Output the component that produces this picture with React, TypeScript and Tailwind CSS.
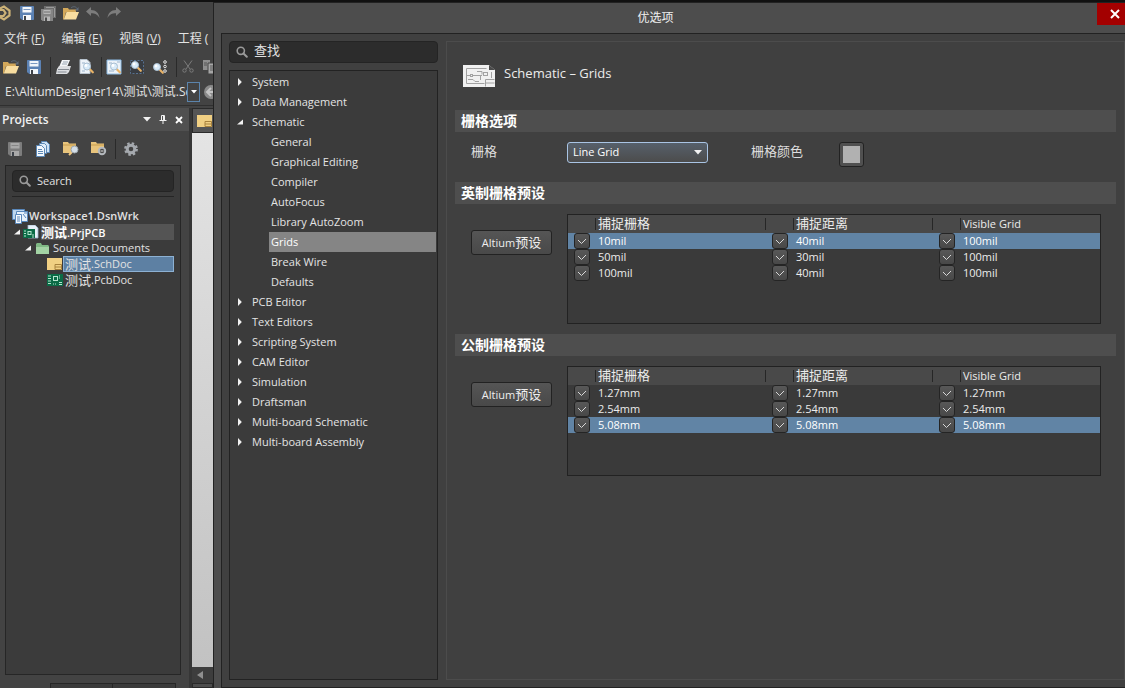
import React, { useState } from "react";

const FONT = "font-['Open_Sans','Noto_Sans_CJK_SC',sans-serif]";

type IconProps = { className?: string };

function Disk({ body, plate, className = "" }: { body: string; plate: string } & IconProps) {
  return (
    <svg viewBox="0 0 14 14" width="14" height="14" className={`shrink-0 ${className}`}>
      <path d="M0.500 0.500h13v13H2l-1.500-1.500z" fill={body} stroke={body} />
      <rect x="2.500" y="1" width="9" height="5.500" fill={plate} />
      <rect x="3" y="9" width="8" height="5" fill={plate} />
      <rect x="4" y="10" width="2" height="4" fill="#3e434a" />
      <path d="M3.500 3.500h7" stroke={body} strokeWidth="0.8" />
    </svg>
  );
}

function DiskStack() {
  return (
    <svg viewBox="0 0 15 15" width="15" height="15" className="shrink-0">
      <path d="M3 0h12v12H3z" fill="#6d6d6d" />
      <path d="M5 1.500h8M13.500 2v9" stroke="#9b9b9b" />
      <path d="M0 3h12v12H1.500L0 13.500z" fill="#858585" />
      <path d="M2.500 4h7v4h-7zM3 10.500h6V15H3z" fill="#b7b7b7" />
      <path d="M3 6h6" stroke="#707070" />
      <path d="M4 11.500h2V15H4z" fill="#4c4c4c" />
    </svg>
  );
}

function OpenFolder({ className = "" }: IconProps) {
  return (
    <svg viewBox="0 0 16 14" width="16" height="14" className={`shrink-0 ${className}`}>
      <path d="M0 2h5l1 1.500h7V6H3L1 13.500H0z" fill="#d3a85a" />
      <path d="M3.500 6H16l-3 7.500H0.8z" fill="#f8dda0" />
      <path d="M8 2c2-2 5-1.500 6 0.500" stroke="#5f6b7a" fill="none" />
      <path d="M15.500 1v3.500H12z" fill="#5f6b7a" />
    </svg>
  );
}

function Curve({ flip }: { flip?: boolean }) {
  return (
    <svg viewBox="0 0 14 12" width="14" height="12" className="shrink-0">
      <g transform={flip ? "matrix(-1 0 0 1 14 0)" : undefined}>
        <path d="M0 4.500 5 0v3c5 0 8 3 8.500 8C11.500 7.500 9 6.300 5 6.300V9z" fill="#7d7d7d" />
      </g>
    </svg>
  );
}

function Lens({ x, y, r = 3.5 }: { x: number; y: number; r?: number }) {
  return (
    <g>
      <path d={`M${x + r * 0.8} ${y + r * 0.8}l3 3`} stroke="#e8b368" strokeWidth="2.200" strokeLinecap="round" />
      <circle cx={x} cy={y} r={r} fill="#d9ebf9" stroke="#a9bfd2" />
      <circle cx={x - 1} cy={y - 1} r={r / 2.5} fill="#ffffff" />
    </g>
  );
}

function Printer() {
  return (
    <svg viewBox="0 0 16 14" width="16" height="14" className="shrink-0">
      <path d="M6 0h8l-3 7H3z" fill="#f4f6f8" />
      <path d="M7 2h5M6 4h5" stroke="#9aa6b2" />
      <path d="M3 6h12l-2 6-2 2H0l1-5z" fill="#dcdee1" />
      <path d="M2 9.500h11M1.500 12h9" stroke="#858b92" />
    </svg>
  );
}

function PageLens({ wide }: { wide?: boolean }) {
  return (
    <svg viewBox="0 0 16 16" width="16" height="16" className="shrink-0">
      <path d={wide ? "M1 1h14v14H1z" : "M2 0.500h7l3 3v11H2z"} fill="#edf3f9" stroke={wide ? "#8dbbe4" : "#b7c2cd"} />
      <path d={wide ? "M3 4h3M3 12h5M11 3h3" : "M4 4h3M4 12h3"} stroke="#9bb3cb" />
      <Lens x={wide ? 8 : 9} y={7.5} />
    </svg>
  );
}

function SelectLens() {
  return (
    <svg viewBox="0 0 16 16" width="16" height="16" className="shrink-0">
      <rect x="1.500" y="1.500" width="13" height="13" fill="#383c42" stroke="#56708f" strokeDasharray="2 1.500" />
      <Lens x={6} y={6} />
    </svg>
  );
}

function DotsLens() {
  return (
    <svg viewBox="0 0 16 16" width="16" height="16" className="shrink-0">
      <Lens x={5} y={8} />
      <g fill="none" stroke="#e6e6e6">
        <circle cx="13" cy="3" r="1.300" />
        <circle cx="13" cy="7.500" r="1.300" />
        <circle cx="13" cy="12" r="1.300" />
      </g>
    </svg>
  );
}

function Cut() {
  return (
    <svg viewBox="0 0 12 13" width="12" height="13" className="shrink-0" fill="none" stroke="#7c7c7c">
      <path d="M2 0.500 8 9M10 0.500 4 9" />
      <circle cx="2.500" cy="10.500" r="1.700" />
      <circle cx="9.500" cy="10.500" r="1.700" />
    </svg>
  );
}

function Copy() {
  return (
    <svg viewBox="0 0 14 14" width="14" height="14" className="shrink-0">
      <path d="M0 0h7v10H0z" fill="#8f8f8f" />
      <path d="M5 3h8v11H5z" fill="#a6a6a6" stroke="#444444" />
      <path d="M1 3h3M1 5h3M7 6h4M7 8h4M7 10h4" stroke="#555555" />
    </svg>
  );
}

function Pages() {
  return (
    <svg viewBox="0 0 14 16" width="14" height="16" className="shrink-0" stroke="#5b87b5">
      <path d="M5.500 0.500h5l3 3v8h-8z" fill="#cfe2f4" />
      <path d="M3.500 2.500h5l2 2v8h-7z" fill="#dfecf8" />
      <path d="M0.500 4.500h5l3 3v8h-8z" fill="#f3f8fd" />
      <path d="M2 8.500h4M2 10.500h5M2 12.500h5" />
    </svg>
  );
}

function FolderTool({ gear }: { gear?: boolean }) {
  return (
    <svg viewBox="0 0 16 15" width="16" height="15" className="shrink-0">
      <path d="M0 1h5l1 1.500h7V12H0z" fill="#e8c47c" />
      <path d="M0 4h13" stroke="#c79c4d" />
      {gear ? (
        <g>
          <circle cx="11" cy="10" r="3.200" fill="#4a4a4a" stroke="#b4b8bd" strokeWidth="2" />
          <path d="M9.500 10h3" stroke="#dddddd" />
        </g>
      ) : (
        <g>
          <path d="M9 11 6 14" stroke="#f0c983" strokeWidth="2" />
          <circle cx="11.500" cy="8.500" r="3.500" fill="#d4dfe8" stroke="#9aa5ae" />
        </g>
      )}
    </svg>
  );
}

function Gear() {
  return (
    <svg viewBox="0 0 14 14" width="14" height="14" className="shrink-0">
      <circle cx="7" cy="7" r="5.700" fill="none" stroke="#a5a9ae" strokeWidth="2.400" strokeDasharray="2.400 2.080" />
      <circle cx="7" cy="7" r="3.800" fill="none" stroke="#a5a9ae" strokeWidth="3" />
    </svg>
  );
}

function Magnifier() {
  return (
    <svg viewBox="0 0 12 12" width="12" height="12" className="shrink-0" fill="none" stroke="#9a9a9a">
      <circle cx="4.800" cy="4.800" r="3.600" strokeWidth="1.600" />
      <path d="m7.500 7.500 3.300 3.300" strokeWidth="2" strokeLinecap="round" />
    </svg>
  );
}

function SchDoc() {
  return (
    <svg viewBox="0 0 15 12" width="15" height="12" className="shrink-0">
      <path d="M0 0h15v12H0z" fill="#f1d083" />
      <path d="M8 6.500h6.500v5M8 6.500v5M8 9h6.500M8 11.500h6.500" fill="none" stroke="#a8823c" />
    </svg>
  );
}

function PcbDoc() {
  return (
    <svg viewBox="0 0 16 12" width="16" height="12" className="shrink-0">
      <path d="M0 0h16v12H0z" fill="#0b6b46" />
      <path d="M1 2h3M1 4.500h3M1 7h3M1 9.500h3M12 8.500h3M12 10.500h3" stroke="#b6e5cf" />
      <rect x="6.500" y="2.500" width="4" height="4" fill="#0b6b46" stroke="#b6e5cf" />
      <path d="M12 2h2M12 4h2M6 10h4" stroke="#b6e5cf" strokeDasharray="1 1" />
    </svg>
  );
}

function Project() {
  return (
    <svg viewBox="0 0 16 14" width="16" height="14" className="shrink-0">
      <path d="M5 0h7l3 3v10H5z" fill="#e8f1fa" stroke="#9db4cc" strokeWidth="0.800" />
      <path d="M0 4h12v9H0z" fill="#0b6b46" />
      <path d="M1 6h2M1 8.500h2M1 11h2M9 10h2M9 12h2" stroke="#b6e5cf" />
      <rect x="5" y="6.500" width="3" height="3" fill="none" stroke="#b6e5cf" />
    </svg>
  );
}

function Workspace() {
  return (
    <svg viewBox="0 0 16 16" width="16" height="16" className="shrink-0" stroke="#5887bb">
      <path d="M0.500 1.500h12v10h-12z" fill="#bcd6ee" />
      <path d="M4.500 3.500h11v10h-11z" fill="#e8f2fb" />
      <path d="M3.500 6.500h6v9h-6z" fill="#f6fafd" />
      <path d="M5 9h3M5 11h3M5 13h3M11 6l3 4M12 5h3" />
    </svg>
  );
}

function GreenFolder() {
  return (
    <svg viewBox="0 0 13 11" width="13" height="11" className="shrink-0">
      <path d="M0 1 1 0h4l1 2h6l1 1v8H0z" fill="#7fb884" />
      <path d="M0 4h13v7H0z" fill="#a3d3a4" />
    </svg>
  );
}

function SheetIcon() {
  return (
    <svg viewBox="0 0 32 22" width="32" height="22" className="shrink-0">
      <path d="M0 0h26l6 5v17H0z" fill="#f1f1f1" />
      <path d="M26 0v5h6z" fill="#4a4a4a" />
      <g fill="none" stroke="#a2a2a2">
        <path d="M3.500 3.500h20M3.500 3.500v15h18M28.500 7v6" />
        <path d="M4 10.500h4M10 10.500h9M5 14.500h5l2 2h4M17.500 10v5M14 6.500h5v3" />
        <rect x="7.500" y="9.500" width="2" height="2" />
        <rect x="20.500" y="7.500" width="4" height="3" />
        <path d="M22.500 21.500v-7h9M22.500 18h9" />
      </g>
    </svg>
  );
}

function AppLogo() {
  return (
    <svg viewBox="3 0 11 16" width="11" height="16" className="shrink-0" fill="none" stroke="#cdb277" strokeWidth="2.200">
      <path d="M2 4 7 1.500l5.500 4v5l-5.500 4-5-3" />
      <path d="M2 11h4.500l2-3-2-3H2" />
    </svg>
  );
}

function Triangle({ open }: { open?: boolean }) {
  return (
    <svg viewBox="0 0 6 8" width="6" height="8" className="shrink-0">
      <path d={open ? "M6 1.500v5H0z" : "M1 0 4.800 4 1 8z"} fill="#f2f2f2" />
    </svg>
  );
}

function Down({ className = "" }: IconProps) {
  return (
    <svg viewBox="0 0 8 5" width="8" height="5" className={`shrink-0 ${className}`}>
      <path d="M0 0h8L4 4.500z" fill="#f2f2f2" />
    </svg>
  );
}

function Cross() {
  return (
    <svg viewBox="0 0 8 8" width="8" height="8" className="shrink-0">
      <path d="M1 1l6 6M7 1 1 7" stroke="#ffffff" strokeWidth="1.800" />
    </svg>
  );
}

function Pin() {
  return (
    <svg viewBox="0 0 8 9" width="8" height="9" className="shrink-0" fill="none" stroke="#f2f2f2">
      <path d="M2.500 5V0.500h3V5M4.500 1v4M0.500 5.500h7M4 5v4" />
    </svg>
  );
}

const Sep = () => <span className="h-5 w-px shrink-0 bg-[#2a2a2a]" />;

function AppWindow() {
  return (
    <div className="flex w-[213px] shrink-0 flex-col overflow-hidden bg-[#434343]">
      <div className="flex h-[22px] shrink-0 items-center">
        <AppLogo />
        <button aria-label="Save" className="ml-[9px]"><Disk body="#5c82b4" plate="#f3f6fa" /></button>
        <button aria-label="Save all" className="ml-[7px]"><DiskStack /></button>
        <button aria-label="Open" className="ml-[7px]"><OpenFolder /></button>
        <button aria-label="Undo" className="ml-[7px]"><Curve /></button>
        <button aria-label="Redo" className="ml-[7px]"><Curve flip /></button>
      </div>
      <nav className="flex h-[30px] shrink-0 items-center gap-[17px] whitespace-nowrap pl-1 text-xs text-[#e4e4e4]">
        {[["文件", "F"], ["编辑", "E"], ["视图", "V"]].map(([name, key]) => (
          <button key={name} className="shrink-0">
            {name} (<span className="underline">{key}</span>)
          </button>
        ))}
        <button className="shrink-0">工程 (</button>
      </nav>
      <div className="flex h-[25px] shrink-0 items-center">
        <button aria-label="Open document" className="ml-[3px]"><OpenFolder /></button>
        <button aria-label="Save document" className="ml-2 mr-[9px]"><Disk body="#5c82b4" plate="#f3f6fa" /></button>
        <Sep />
        <button aria-label="Print" className="ml-[5px]"><Printer /></button>
        <button aria-label="Preview" className="ml-[6px] mr-[7px]"><PageLens /></button>
        <Sep />
        <button aria-label="Fit document" className="ml-1"><PageLens wide /></button>
        <button aria-label="Zoom area" className="ml-[7px]"><SelectLens /></button>
        <button aria-label="Zoom selected" className="ml-[7px] mr-2"><DotsLens /></button>
        <Sep />
        <button aria-label="Cut" className="ml-[5px]"><Cut /></button>
        <button aria-label="Copy" className="ml-[9px]"><Copy /></button>
      </div>
      <div className="flex h-[27px] shrink-0 items-center border-b border-[#303030]">
        <input
          aria-label="Path"
          defaultValue="E:\AltiumDesigner14\测试\测试.SchDoc"
          className="w-[187px] shrink-0 bg-transparent pl-[5px] text-xs text-[#e4e4e4] outline-none"
        />
        <button aria-label="Path history" className="flex h-5 w-[13px] shrink-0 items-center justify-center border border-[#5b84ac]">
          <svg viewBox="0 0 6 4" width="6" height="4"><path d="M0 0h6L3 3.500z" fill="#ffffff" /></svg>
        </button>
        <button aria-label="Back" className="ml-1 shrink-0">
          <svg viewBox="0 0 14 14" width="14" height="14">
            <circle cx="7" cy="7" r="7" fill="#8a8a8a" />
            <path d="M7 3 3 7l4 4M3 7h8" stroke="#c4c4c4" strokeWidth="2" fill="none" />
          </svg>
        </button>
      </div>
      <div className="flex min-h-0 flex-1 pt-[2px]">
        <ProjectsPanel />
        <div className="flex flex-1 flex-col border-l-[3px] border-[#363636]">
          <div className="flex h-[25px] shrink-0 items-center border border-r-0 border-[#2a2a2a] bg-[#555555] pl-1">
            <SchDoc />
          </div>
          <div className="flex-1 bg-linear-to-b from-[#e4e4e4] to-[#c2c2c2]" />
          <button aria-label="Scroll left" className="flex h-4 shrink-0 items-center bg-[#3d3d3d] pl-[5px]">
            <svg viewBox="0 0 6 8" width="6" height="8"><path d="M6 0v8L0 4z" fill="#8f8f8f" /></svg>
          </button>
          <div className="h-[5px] shrink-0 border border-[#2a2a2a] bg-[#4d4d4d]" />
        </div>
      </div>
    </div>
  );
}

function ProjectsPanel() {
  return (
    <section className="flex w-[189px] shrink-0 flex-col">
      <header className="flex h-[23px] shrink-0 items-center bg-[#505050] pl-[2px] pr-[6px]">
        <h2 className="flex-1 text-xs font-semibold text-[#f0f0f0]">Projects</h2>
        <button aria-label="Panel menu" className="mr-2"><Down /></button>
        <button aria-label="Pin panel" className="mr-2"><Pin /></button>
        <button aria-label="Close panel"><Cross /></button>
      </header>
      <div className="flex h-[34px] shrink-0 items-center pl-2 pt-px">
        <button aria-label="Save project"><Disk body="#7d7d7d" plate="#a9a9a9" /></button>
        <button aria-label="Compile" className="ml-[14px]"><Pages /></button>
        <button aria-label="Explore" className="ml-[13px]"><FolderTool /></button>
        <button aria-label="Folder options" className="ml-3 mr-2"><FolderTool gear /></button>
        <Sep />
        <button aria-label="Settings" className="ml-2"><Gear /></button>
      </div>
      <div className="ml-[5px] mr-2 flex min-h-0 flex-1 flex-col border border-[#262626] bg-[#3b3b3b] px-[6px] pt-1">
        <label className="flex h-[22px] shrink-0 items-center gap-[6px] rounded border border-[#242424] bg-[#2c2c2c] pl-[6px]">
          <Magnifier />
          <input type="search" placeholder="Search" className="min-w-0 flex-1 bg-transparent text-[11px] text-white outline-none placeholder:text-[#e0e0e0]" />
        </label>
        <div className="mt-1 h-px shrink-0 bg-[#252525]" />
        <ul className="mt-[11px] whitespace-nowrap text-[11px] leading-4 text-[#e2e2e2]">
          <li className="flex h-4 items-center gap-px font-semibold"><Workspace />Workspace1.DsnWrk</li>
          <li className="flex h-4 items-center pl-[2px] font-semibold text-white">
            <Triangle open />
            <span className="ml-[3px]"><Project /></span>
            <span className="ml-[2px] h-4 flex-1 bg-[#545454]"><span className="text-[13px]">测试</span>.PrjPCB</span>
          </li>
          <li className="flex h-4 items-center pl-[13px]">
            <Triangle open />
            <span className="ml-[5px]"><GreenFolder /></span>
            <span className="ml-1">Source Documents</span>
          </li>
          <li className="flex h-4 items-center pl-[35px]">
            <SchDoc />
            <span className="ml-px flex h-4 flex-1 items-center border border-[#8db1d3] bg-[#5d80a3] pl-px">
              <span className="text-[13px]">测试</span>.SchDoc
            </span>
          </li>
          <li className="flex h-4 items-center pl-[35px]">
            <PcbDoc />
            <span className="flex items-center pl-[2px]"><span className="text-[13px]">测试</span>.PcbDoc</span>
          </li>
        </ul>
      </div>
      <footer className="mt-2 flex h-[5px] shrink-0 pl-[50px]">
        <span className="w-[63px] border border-b-0 border-[#262626] bg-[#3a3a3a]" />
        <span className="w-[63px] border border-b-0 border-l-0 border-[#262626] bg-[#3a3a3a]" />
      </footer>
    </section>
  );
}

type Node = { name: string; children?: string[] };

const CATEGORIES: Node[] = [
  { name: "System" },
  { name: "Data Management" },
  {
    name: "Schematic",
    children: ["General", "Graphical Editing", "Compiler", "AutoFocus", "Library AutoZoom", "Grids", "Break Wire", "Defaults"],
  },
  { name: "PCB Editor" },
  { name: "Text Editors" },
  { name: "Scripting System" },
  { name: "CAM Editor" },
  { name: "Simulation" },
  { name: "Draftsman" },
  { name: "Multi-board Schematic" },
  { name: "Multi-board Assembly" },
];

function CategoryTree() {
  const [page, setPage] = useState("Grids");
  return (
    <ul className="flex-1 border border-[#222222] bg-[#3b3b3b] pr-px pt-px text-[11px] leading-5 text-[#e4e4e4]">
      {CATEGORIES.map((node) => (
        <li key={node.name}>
          <button className="flex h-5 w-full items-center gap-[9px] pl-[7px]">
            <Triangle open={!!node.children} />
            {node.name}
          </button>
          {node.children && (
            <ul className="pl-[39px]">
              {node.children.map((child) => (
                <li key={child}>
                  <button
                    onClick={() => setPage(child)}
                    className={`block h-5 w-full pl-[2px] text-left ${page === child ? "bg-[#858585] text-white" : ""}`}
                  >
                    {child}
                  </button>
                </li>
              ))}
            </ul>
          )}
        </li>
      ))}
    </ul>
  );
}

function Check({ label }: { label: string }) {
  return (
    <span className="relative mx-auto block size-4">
      <input
        type="checkbox"
        defaultChecked
        aria-label={label}
        className="peer block size-4 appearance-none rounded-[3px] border border-[#242424] bg-linear-to-b from-[#585858] to-[#484848]"
      />
      <svg viewBox="0 0 16 16" width="16" height="16" className="pointer-events-none absolute inset-0 hidden peer-checked:block">
        <path d="m4 7 3.500 3.500L12 6" fill="none" stroke="#d8d8d8" />
      </svg>
    </span>
  );
}

const HEADINGS = ["捕捉栅格", "捕捉距离", "Visible Grid"];

function PresetTable({ rows, selected }: { rows: string[][]; selected: number }) {
  return (
    <div className="h-[110px] min-w-0 flex-1 border border-[#222222] bg-[#3a3a3a]">
      <table className="w-full table-fixed border-collapse text-left text-[11px] text-[#ececec]">
        <colgroup>
          <col className="w-[28px]" />
          <col className="w-[170px]" />
          <col className="w-[28px]" />
          <col className="w-[139px]" />
          <col className="w-[28px]" />
          <col />
        </colgroup>
        <thead>
          <tr className="h-[18px] bg-[#494949]">
            {HEADINGS.map((heading, i) => (
              <React.Fragment key={heading}>
                <td className="p-0"><span className="block h-3 border-r border-[#262626]" /></td>
                <th className="p-0 font-normal">
                  <span className={`flex h-3 items-center pl-[2px] ${i < 2 ? "border-r border-[#262626] text-[13px]" : ""}`}>
                    {heading}
                  </span>
                </th>
              </React.Fragment>
            ))}
          </tr>
        </thead>
        <tbody>
          {rows.map((row, r) => (
            <tr key={r} className={`h-4 leading-4 ${r === selected ? "bg-[#6184a5] text-white" : ""}`}>
              {row.map((value, c) => (
                <React.Fragment key={c}>
                  <td className="p-0"><Check label={`${HEADINGS[c]} ${value}`} /></td>
                  <td className="p-0 pl-[2px]">{value}</td>
                </React.Fragment>
              ))}
            </tr>
          ))}
        </tbody>
      </table>
    </div>
  );
}

function SectionTitle({ children }: { children: string }) {
  return <h3 className="flex h-[22px] items-center bg-[#4e4e4e] pb-px pl-[6px] text-sm font-bold text-white">{children}</h3>;
}

function PresetSection({ title, rows, selected }: { title: string; rows: string[][]; selected: number }) {
  return (
    <section>
      <SectionTitle>{title}</SectionTitle>
      <div className="mb-[10px] mt-[10px] flex items-start pl-4 pr-[15px]">
        <button className="mr-[15px] mt-4 h-[25px] w-[81px] shrink-0 rounded-[3px] border border-[#222222] bg-linear-to-b from-[#555555] to-[#494949] text-[11px] text-[#eeeeee]">
          Altium<span className="text-[13px]">预设</span>
        </button>
        <PresetTable rows={rows} selected={selected} />
      </div>
    </section>
  );
}

function Preferences() {
  return (
    <div className="flex min-w-0 flex-1 flex-col border-l border-t border-[#222222] bg-[#4d4d4d]">
      <header className="flex h-[30px] shrink-0 items-start">
        <h1 className="flex-1 self-center text-center text-xs text-[#f0f0f0]">优选项</h1>
        <button aria-label="Close" className="flex h-[22px] w-7 items-center justify-center bg-[#a30000] pl-2">
          <svg viewBox="0 0 10 10" width="10" height="10"><path d="M1 1l8 8M9 1 1 9" stroke="#ffffff" strokeWidth="2" /></svg>
        </button>
      </header>
      <div className="ml-[7px] flex min-h-0 flex-1 border border-r-0 border-[#222222] bg-[#404040] pl-[7px] pt-[7px]">
        <aside className="flex w-[209px] shrink-0 flex-col pb-[7px]">
          <label className="mb-[7px] flex h-[22px] shrink-0 items-center gap-[6px] rounded border border-[#242424] bg-[#2c2c2c] pl-[6px]">
            <Magnifier />
            <input type="search" placeholder="查找" className="min-w-0 flex-1 bg-transparent pb-[2px] text-[13px] text-white outline-none placeholder:text-[#e0e0e0]" />
          </label>
          <CategoryTree />
        </aside>
        <main className="mb-[7px] ml-2 min-w-0 flex-1 border border-[#4c4c4c] pl-2 pr-2">
          <header className="flex h-[68px] items-center gap-[9px] pl-2">
            <SheetIcon />
            <h2 className="pb-1 text-[13px] text-[#ececec]">Schematic – Grids</h2>
          </header>
          <section>
            <SectionTitle>栅格选项</SectionTitle>
            <div className="flex h-[50px] items-start pl-4 text-[13px] text-[#dedede]">
              <label htmlFor="grid" className="mt-[10px] w-24">栅格</label>
              <span className="relative mt-[10px] w-[141px]">
                <select
                  id="grid"
                  className="h-[21px] w-full appearance-none rounded-[3px] border border-[#a9c4e4] bg-linear-to-b from-[#56606b] to-[#4c4c4c] pl-[5px] text-[11px] text-white outline-none"
                >
                  <option>Line Grid</option>
                  <option>Dot Grid</option>
                </select>
                <Down className="pointer-events-none absolute right-[6px] top-2" />
              </span>
              <span className="ml-[43px] mt-[10px] w-[88px]">栅格颜色</span>
              <button aria-label="栅格颜色" className="mt-[10px] flex size-[25px] items-center justify-center rounded-[3px] border border-[#222222] bg-[#505050]">
                <span className="size-[17px] bg-[#b1b1b1]" />
              </button>
            </div>
          </section>
          <PresetSection
            title="英制栅格预设"
            selected={0}
            rows={[["10mil", "40mil", "100mil"], ["50mil", "30mil", "100mil"], ["100mil", "40mil", "100mil"]]}
          />
          <PresetSection
            title="公制栅格预设"
            selected={2}
            rows={[["1.27mm", "1.27mm", "1.27mm"], ["2.54mm", "2.54mm", "2.54mm"], ["5.08mm", "5.08mm", "5.08mm"]]}
          />
        </main>
      </div>
    </div>
  );
}

export default function App() {
  return (
    <div className={`flex h-screen min-h-[500px] w-full overflow-hidden border-t-2 border-[#111111] bg-[#434343] ${FONT}`}>
      <AppWindow />
      <Preferences />
    </div>
  );
}
